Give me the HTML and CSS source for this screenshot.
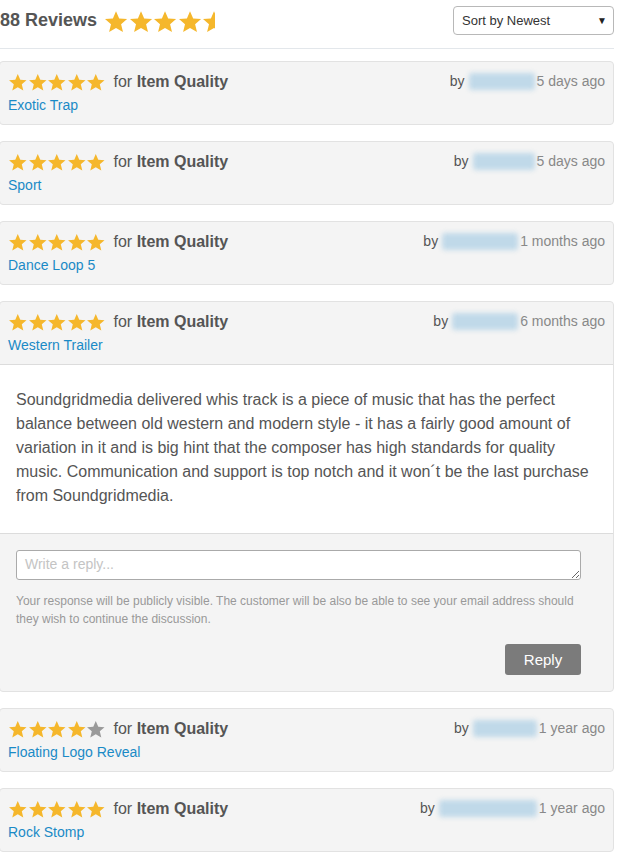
FILE: index.html
```html
<!DOCTYPE html>
<html>
<head>
<meta charset="utf-8">
<link rel="stylesheet" href="styles.css">
</head>
<body>
<svg width="0" height="0" class="defs">
  <defs>
    <symbol id="star" viewBox="0 0 24 24"><path d="M12 1.2l3.2 7.3 7.9.6-6 5.2 1.9 7.8L12 18l-6.9 4.1 1.9-7.8-6-5.2 7.9-.6z"/></symbol>
    <clipPath id="half"><rect x="0" y="0" width="13" height="24"/></clipPath>
  </defs>
</svg>
<div class="page">
  <div class="head">
    <div class="title">88 Reviews</div>
    <div class="stars big">
      <svg><use href="#star"/></svg><svg><use href="#star"/></svg><svg><use href="#star"/></svg><svg><use href="#star"/></svg><svg viewBox="0 0 24 24"><path clip-path="url(#half)" d="M12 1.2l3.2 7.3 7.9.6-6 5.2 1.9 7.8L12 18l-6.9 4.1 1.9-7.8-6-5.2 7.9-.6z"/></svg>
    </div>
    <div class="sort">Sort by Newest <span class="caret">▼</span></div>
  </div>

  <div class="card">
    <div class="row">
      <div class="left">
        <div class="line"><span class="stars"><svg><use href="#star"/></svg><svg><use href="#star"/></svg><svg><use href="#star"/></svg><svg><use href="#star"/></svg><svg><use href="#star"/></svg></span><span class="for">for <b>Item Quality</b></span></div>
        <a class="item">Exotic Trap</a>
      </div>
      <div class="meta">by <span class="blur w66"></span><span class="time">5 days ago</span></div>
    </div>
  </div>

  <div class="card">
    <div class="row">
      <div class="left">
        <div class="line"><span class="stars"><svg><use href="#star"/></svg><svg><use href="#star"/></svg><svg><use href="#star"/></svg><svg><use href="#star"/></svg><svg><use href="#star"/></svg></span><span class="for">for <b>Item Quality</b></span></div>
        <a class="item">Sport</a>
      </div>
      <div class="meta">by <span class="blur w62"></span><span class="time">5 days ago</span></div>
    </div>
  </div>

  <div class="card">
    <div class="row">
      <div class="left">
        <div class="line"><span class="stars"><svg><use href="#star"/></svg><svg><use href="#star"/></svg><svg><use href="#star"/></svg><svg><use href="#star"/></svg><svg><use href="#star"/></svg></span><span class="for">for <b>Item Quality</b></span></div>
        <a class="item">Dance Loop 5</a>
      </div>
      <div class="meta">by <span class="blur w76"></span><span class="time">1 months ago</span></div>
    </div>
  </div>

  <div class="card">
    <div class="row">
      <div class="left">
        <div class="line"><span class="stars"><svg><use href="#star"/></svg><svg><use href="#star"/></svg><svg><use href="#star"/></svg><svg><use href="#star"/></svg><svg><use href="#star"/></svg></span><span class="for">for <b>Item Quality</b></span></div>
        <a class="item">Western Trailer</a>
      </div>
      <div class="meta">by <span class="blur w66"></span><span class="time">6 months ago</span></div>
    </div>
    <div class="body">Soundgridmedia delivered whis track is a piece of music that has the perfect balance between old western and modern style - it has a fairly good amount of variation in it and is big hint that the composer has high standards for quality music. Communication and support is top notch and it won´t be the last purchase from Soundgridmedia.</div>
    <div class="reply">
      <textarea class="input" placeholder="Write a reply..."></textarea>
      <p class="note">Your response will be publicly visible. The customer will be also be able to see your email address should they wish to continue the discussion.</p>
      <div class="actions"><button class="btn">Reply</button></div>
    </div>
  </div>

  <div class="card">
    <div class="row">
      <div class="left">
        <div class="line"><span class="stars"><svg><use href="#star"/></svg><svg><use href="#star"/></svg><svg><use href="#star"/></svg><svg><use href="#star"/></svg><svg class="off"><use href="#star"/></svg></span><span class="for">for <b>Item Quality</b></span></div>
        <a class="item">Floating Logo Reveal</a>
      </div>
      <div class="meta">by <span class="blur w64"></span><span class="time">1 year ago</span></div>
    </div>
  </div>

  <div class="card">
    <div class="row">
      <div class="left">
        <div class="line"><span class="stars"><svg><use href="#star"/></svg><svg><use href="#star"/></svg><svg><use href="#star"/></svg><svg><use href="#star"/></svg><svg><use href="#star"/></svg></span><span class="for">for <b>Item Quality</b></span></div>
        <a class="item">Rock Stomp</a>
      </div>
      <div class="meta">by <span class="blur w98"></span><span class="time">1 year ago</span></div>
    </div>
  </div>
</div>
</body>
</html>
```

FILE: styles.css
```css
html, body {
  margin: 0;
  padding: 0;
  background: #fff;
}
body {
  font-family: "Liberation Sans", Arial, sans-serif;
  color: #555;
  overflow: hidden;
}
.defs {
  position: absolute;
  width: 0;
  height: 0;
}
.page {
  width: 615px;
  margin-left: -1px;
}
.head {
  display: flex;
  align-items: center;
  height: 49px;
  border-bottom: 1px solid #e3e7eb;
  margin-left: 1px;
  box-sizing: border-box;
}
.title {
  font-size: 18px;
  font-weight: bold;
  color: #555;
  margin-top: -8px;
}
.stars {
  display: inline-flex;
  fill: #f5b72c;
}
.stars svg {
  width: 19.5px;
  height: 19px;
  flex: none;
}
.stars svg.off {
  fill: #9a9a9a;
}
.stars.big {
  margin-left: 7px;
  margin-top: -5px;
  gap: 0.5px;
}
.stars.big svg {
  width: 24px;
  height: 24px;
}
.sort {
  margin-left: auto;
  margin-top: -8px;
  width: 161px;
  height: 29px;
  box-sizing: border-box;
  border: 1px solid #b8b8b8;
  border-radius: 4px;
  font-size: 13px;
  color: #333;
  display: flex;
  align-items: center;
  padding: 0 6px 0 8px;
}
.caret {
  margin-left: auto;
  font-size: 10px;
  color: #222;
}
.card {
  background: #f4f4f4;
  border: 1px solid #e2e2e2;
  border-radius: 4px;
  margin-top: 16px;
}
.head + .card {
  margin-top: 12px;
}
.row {
  display: flex;
  justify-content: space-between;
  padding: 9px 8px 9px 8px;
}
.line {
  display: flex;
  align-items: center;
  height: 22px;
  font-size: 16px;
  color: #555;
}
.for {
  margin-left: 8px;
}
.line b {
  color: #555;
}
.item {
  display: block;
  font-size: 14px;
  line-height: 20px;
  color: #1a8ac6;
  margin-top: 2px;
}
.meta {
  font-size: 14px;
  line-height: 20px;
  color: #555;
  display: flex;
  align-items: center;
  height: 20px;
  white-space: nowrap;
}
.blur {
  display: inline-block;
  height: 17px;
  margin: 0 2px 0 4px;
  background: #c0d9e9;
  border-radius: 3px;
  filter: blur(2.5px);
}
.w62 { width: 62px; }
.w64 { width: 64px; }
.w66 { width: 66px; }
.w76 { width: 76px; }
.w98 { width: 98px; }
.time {
  color: #888;
}
.body {
  background: #fff;
  border-top: 1px solid #dcdcdc;
  border-bottom: 1px solid #dcdcdc;
  padding: 23px 16px 25px 16px;
  font-size: 16px;
  line-height: 24px;
  color: #555;
}
.reply {
  padding: 16px 32px 16px 16px;
}
.input {
  display: block;
  width: 100%;
  height: 30px;
  box-sizing: border-box;
  border: 1px solid #aaa;
  border-radius: 3px;
  font-family: "Liberation Sans", Arial, sans-serif;
  font-size: 14px;
  padding: 5px 8px;
  resize: vertical;
  margin: 0;
}
.input::placeholder {
  color: #c4c4c4;
}
.note {
  margin: 12px 0 0;
  font-size: 12px;
  line-height: 18px;
  color: #999;
}
.actions {
  display: flex;
  justify-content: flex-end;
  margin-top: 16px;
}
.btn {
  width: 76px;
  height: 31px;
  background: #7b7b7b;
  color: #fff;
  border: 0;
  border-radius: 3px;
  font-family: "Liberation Sans", Arial, sans-serif;
  font-size: 15px;
}
```
